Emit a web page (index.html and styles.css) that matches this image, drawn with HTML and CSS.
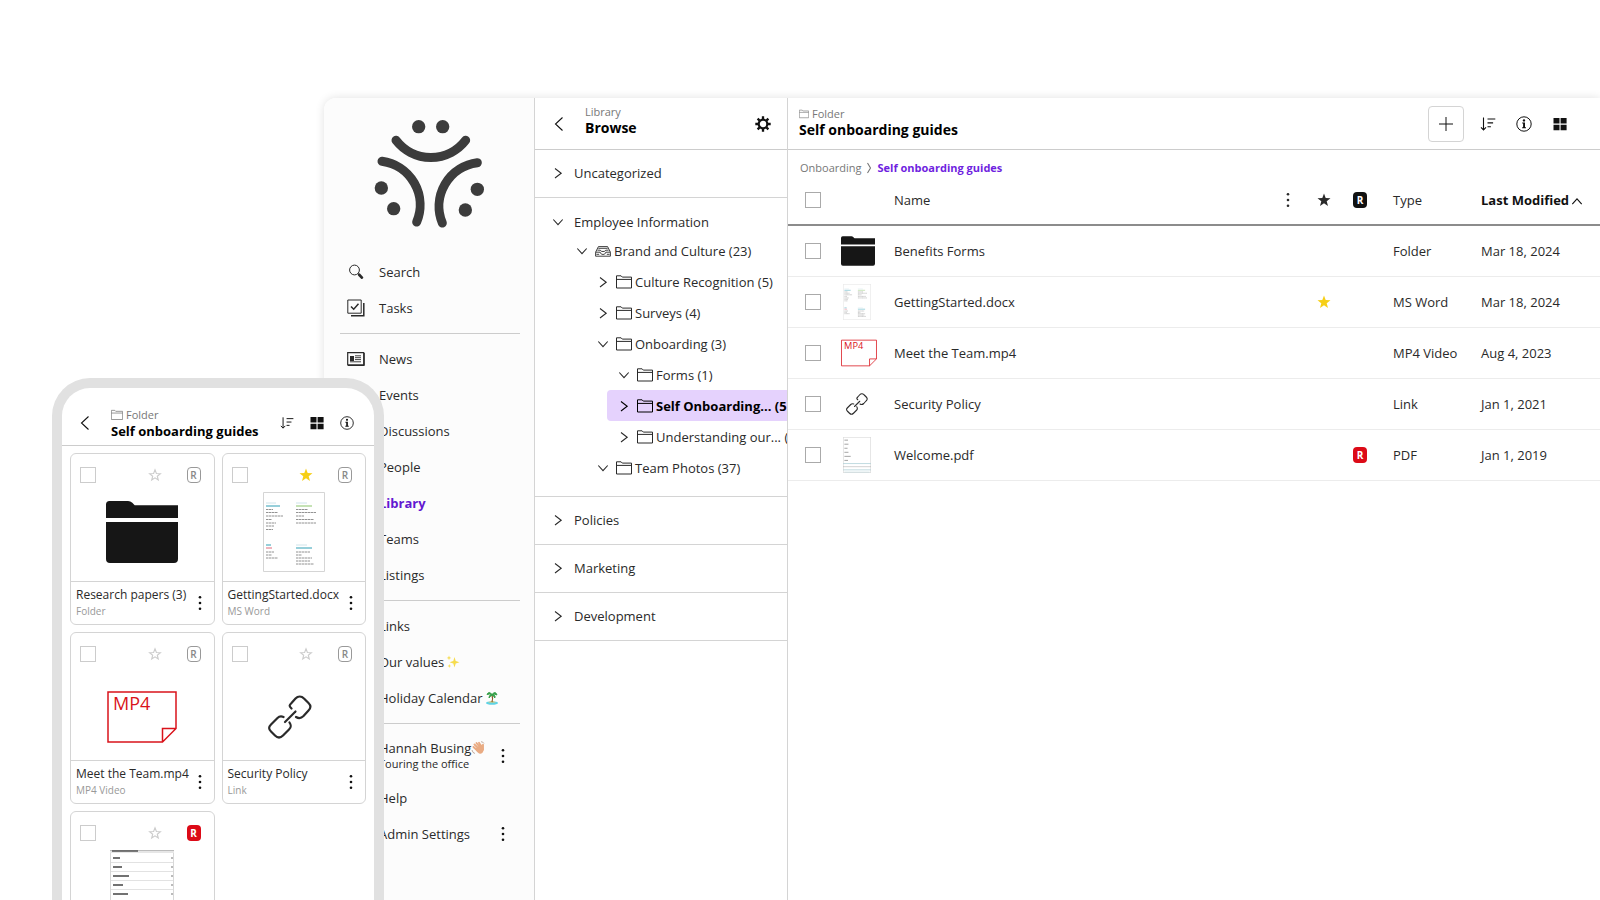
FILE: index.html
```html
<!DOCTYPE html>
<html lang="en">
<head>
<meta charset="utf-8">
<title>Library</title>
<link rel="stylesheet" href="styles.css">
</head>
<body>
<svg class="sprite" aria-hidden="true">
  <symbol id="left" viewBox="0 0 16 16"><path d="M11.5 1.5 4.5 8l7 6.5" fill="none" stroke="currentColor" stroke-width="1.1"/></symbol>
  <symbol id="right" viewBox="0 0 16 16"><path d="M5 3.5 11.2 8.2 5 13" fill="none" stroke="currentColor" stroke-width="1.1"/></symbol>
  <symbol id="crumb" viewBox="0 0 10 14"><path d="M3.5 2 6.500 7l-3 5" fill="none" stroke="currentColor" stroke-width="1.1"/></symbol>
  <symbol id="down" viewBox="0 0 16 16"><path d="M3.3 5.5 8 10.7l4.7-5.2" fill="none" stroke="currentColor" stroke-width="1.1"/></symbol>
  <symbol id="up" viewBox="0 0 16 16"><path d="M3.3 12.2 8 6.800l4.7 5.4" fill="none" stroke="currentColor" stroke-width="1.1"/></symbol>
  <symbol id="folder" viewBox="0 0 16 16"><path d="M.5 14V1.8h4.6l1.2 1.3h9.2V14zM.5 5.4h15" fill="none" stroke="currentColor"/></symbol>
  <symbol id="tray" viewBox="0 0 16 16"><path d="M.6 9.2 3.4 3.6h9.2l2.8 5.6v4H.6zM.8 9.2h4.4c.3 3 5.3 3 5.6 0h4.4M2.4 7.2h2.8c.4 1.8 5.2 1.8 5.6 0h2.8M3.3 5.3h9.4M1.4 11.3h2.8m7.6 0h2.8" fill="none" stroke="currentColor" stroke-width=".9"/></symbol>
  <symbol id="dots" viewBox="0 0 16 16"><circle cx="8" cy="2.2" r="1.3"/><circle cx="8" cy="8" r="1.3"/><circle cx="8" cy="13.8" r="1.3"/></symbol>
  <symbol id="star" viewBox="0 0 16 16"><path d="m8 1.5 1.7 4.5 4.8.2-3.8 3 1.3 4.7L8 11.2l-4 2.7 1.3-4.7-3.8-3 4.8-.2z"/></symbol>
  <symbol id="star-line" viewBox="0 0 16 16"><path d="m8 2.800 1.400 3.700 4 .2-3.100 2.500 1 3.800L8 10.800 4.700 13l1-3.800-3.100-2.500 4-.2z" fill="none" stroke="currentColor" stroke-width="1.100"/></symbol>
  <symbol id="sort" viewBox="0 0 16 16"><path d="M3.5 1.5v12.3M1 11.3l2.5 2.6L6 11.3M7.5 3h7.8M7.5 6.9h5.6M7.5 10.7h3.4" fill="none" stroke="currentColor" stroke-width="1.1"/></symbol>
  <symbol id="info" viewBox="0 0 16 16"><circle cx="8" cy="8" r="7.2" fill="none" stroke="currentColor" stroke-width="1"/><circle cx="8" cy="4.4" r="1.2"/><path d="M6.2 6.6H9v4.6h1v1H6.1v-1h1V7.6h-.9z"/></symbol>
  <symbol id="tiles" viewBox="0 0 16 16"><path d="M1.5 2h6v5.6h-6zM8.6 2h6v5.6h-6zM1.5 8.7h6v5.6h-6zM8.6 8.7h6v5.6h-6z"/></symbol>
  <symbol id="plus" viewBox="0 0 16 16"><path d="M8 1v14M1 8h14" fill="none" stroke="currentColor" stroke-width="1"/></symbol>
  <symbol id="gear" viewBox="0 0 16 16"><circle cx="8" cy="8" r="4.3" fill="none" stroke="currentColor" stroke-width="2.2"/><path d="M8 .3v3M8 12.7v3M.3 8h3M12.7 8h3M2.6 2.6l2 2M11.4 11.4l2 2M2.6 13.4l2-2M11.4 4.6l2-2" stroke="currentColor" stroke-width="2.3"/></symbol>
  <symbol id="search" viewBox="0 0 18 18"><circle cx="7.5" cy="7" r="4.9" fill="none" stroke="currentColor"/><path d="m11.2 10.6 1.5 1.4" stroke="currentColor"/><path d="m12.2 11.8 2.7 2.8" stroke="currentColor" stroke-width="2.8" stroke-linecap="round"/></symbol>
  <symbol id="tasks" viewBox="0 0 18 18"><path d="M.8 1h13.4v13.2H.8z" fill="none" stroke="currentColor"/><path d="M16.8 4v12.8H4" fill="none" stroke="currentColor" stroke-width="1.5"/><path d="m4 7.5 2.7 2.7 4.8-5.4" fill="none" stroke="currentColor" stroke-width="1.5"/></symbol>
  <symbol id="news" viewBox="0 0 18 18"><path d="M.7 2.6h16v12.2H.7z" fill="none" stroke="currentColor" stroke-width="1.2"/><path d="M17.3 3v12.5H1" fill="none" stroke="currentColor"/><path d="M3 6h4v5H3z"/><path d="M8 5.8h6M8 7.7h6M8 9.6h6M3 11.8h11" stroke="currentColor" stroke-width=".9"/></symbol>
  <symbol id="folder-solid" viewBox="0 0 72 62"><path d="M0 17V3.500Q0 0 3.500 0H22q2.500 0 4.300 1.800l2.400 2.400H72V17zM0 21h72v37q0 4-4 4H4q-4 0-4-4z"/></symbol>
  <symbol id="video" viewBox="0 0 70 52"><path d="M1 1h68v36.500L55.500 51H1zM69 37.500H55.500V51" fill="none" stroke="currentColor" stroke-width="1.500"/><text x="6" y="19" font-size="18" font-weight="500" fill="currentColor">MP4</text></symbol>
  <symbol id="chain" viewBox="0 0 44 44"><g fill="none" stroke="currentColor" stroke-width="2.200" stroke-linecap="round" stroke-linejoin="round"><path d="M17 27 27.500 16.500"/><path d="M23.500 13.500C21 11 21 10.500 23.500 8l4-4.500c2.500-2.700 6-2.700 8.500 0l4.500 4.500c2.500 2.500 2.500 5 0 7.500l-5 5.500c-2.500 2.500-5 2.500-7.500 1"/><path d="M15.500 22c-2.500-1-4-1-6 1L3 29.500c-2.500 2.500-2.500 4.500 0 7l4 4c2.500 2.500 5.500 2.500 8 0l6-6c2.500-2.500 2.500-4 .5-7"/></g></symbol>
  <symbol id="doc" viewBox="0 0 62 80"><path d="M.5.5h61v79H.5z" fill="#fff" stroke="#d5d5d5"/><path d="M3 14h14M3 53h5" stroke="#2f9fb5"/><path d="M33 14h16" stroke="#8bc56a"/><path d="M33 56h16" stroke="#2f9fb5"/><path d="M3 11h10M33 11h11M33 53h11" stroke="#cfe4ea"/><path d="M3 56h6" stroke="#df6a7a"/><path d="M3 17.500h7M3 20.500h12M3 24h17M3 27.500h6M3 31h10M3 34h8M3 37.500h7M33 17.500h12M33 20.500h20M33 24h8M33 27.500h18M33 31h20M3 60h8M3 63h6M3 66h12M33 60h14M33 63h6M33 66h16M33 69h14M33 72h18" stroke="#777" stroke-width=".8" stroke-dasharray="2.500 .5"/></symbol>
  <symbol id="pdf" viewBox="0 0 62 80"><path d="M.5.5h61v79H.5z" fill="#fff" stroke="#b8b8b8"/><path d="M3 7h8M3 16h9M3 25h7M3 34h9M3 43h14M3 52h8" stroke="#777" stroke-width="1.500"/><path d="M0 59h62M0 73h62" stroke="#a3c9d1" stroke-width="1.500"/><path d="M0 66h62" stroke="#999"/><path d="M3 78h56" stroke="#a3c9d1"/></symbol>
</svg>

<main class="window">
  <nav class="sidebar" aria-label="Main">
    <svg class="logo" viewBox="190 110 342 342" role="img" aria-label="Logo">
      <g fill="none" stroke="#3c3c3c" stroke-width="27" stroke-linecap="round"><path d="M259 180A132 132 0 0 0 468 180"/><path d="M217 243A132 132 0 0 1 321 425"/><path d="M503 247A132 132 0 0 0 398 428"/></g>
      <g fill="#3c3c3c"><circle cx="327" cy="139" r="20"/><circle cx="399" cy="139" r="20"/><circle cx="215" cy="323" r="20"/><circle cx="252" cy="385" r="20"/><circle cx="503" cy="327" r="20"/><circle cx="467" cy="389" r="20"/></g>
    </svg>
    <a class="nav-item" href="#"><svg class="icon-lg"><use href="#search"/></svg>Search</a>
    <a class="nav-item" href="#"><svg class="icon-lg"><use href="#tasks"/></svg>Tasks</a>
    <hr class="rule">
    <a class="nav-item" href="#"><svg class="icon-lg"><use href="#news"/></svg>News</a>
    <a class="nav-item plain" href="#">Events</a>
    <a class="nav-item plain" href="#">Discussions</a>
    <a class="nav-item plain" href="#">People</a>
    <a class="nav-item plain current" href="#">Library</a>
    <a class="nav-item plain" href="#">Teams</a>
    <a class="nav-item plain" href="#">Listings</a>
    <hr class="rule">
    <a class="nav-item plain" href="#">Links</a>
    <a class="nav-item plain" href="#">Our values
      <svg class="emoji" viewBox="0 0 14 14"><g fill="#f6dc4e"><path d="M8.500 2 9.700 6l3.800 1.200-3.800 1.300-1.200 4-1.200-4-3.800-1.300L7.300 6zM3 .5l.6 1.800 1.700.6-1.700.6L3 5.300l-.6-1.800-1.700-.6 1.700-.6zM3.300 9l.5 1.400 1.300.5-1.300.5-.5 1.500-.5-1.500-1.300-.5 1.300-.5z"/></g></svg></a>
    <a class="nav-item plain" href="#">Holiday Calendar
      <svg class="emoji" viewBox="0 0 14 14"><ellipse cx="7" cy="12" rx="6" ry="1.700" fill="#5fd4e6"/><path d="M3 11.500q4-3 8 0z" fill="#edc56b"/><path d="M7 4q1.200 3.500 0 7" fill="none" stroke="#8a5a2c" stroke-width="1.300"/><path d="M7 3.500Q4-.5 2 3.500q2.500-1 5 .3Q3.500 4 4 7q1.500-2 3-3 2 .8 2.800 3Q11 4 7.300 3.700 10 2.500 12 4 10.500-.5 7 3.500z" fill="#37a04a" stroke="#37a04a"/></svg></a>
    <hr class="rule">
    <div class="nav-row user">
      <a class="nav-item plain stacked" href="#"><span class="user-name">Hannah Busing
        <svg class="emoji" viewBox="0 0 14 14"><path d="M3.500 3.500 8 8M5.500 2 9.500 7M8 1.800l3 5M2.500 6 7 10M12 3.800v5" stroke="#e9ab83" stroke-width="1.900" stroke-linecap="round"/><path d="m4 8 6.500-4.500L12.500 8q.2 4-3 4.800Q7 13 4 8z" fill="#e9ab83"/><path d="M1 9q.5 3 3 3.500M10 .7q2 0 3 1.800" fill="none" stroke="#a98b7a" stroke-width=".7"/></svg></span><small>Touring the office</small></a>
      <button class="icon-button" aria-label="User menu"><svg class="icon"><use href="#dots"/></svg></button>
    </div>
    <a class="nav-item plain" href="#">Help</a>
    <div class="nav-row">
      <a class="nav-item plain" href="#">Admin Settings</a>
      <button class="icon-button" aria-label="Admin menu"><svg class="icon"><use href="#dots"/></svg></button>
    </div>
  </nav>

  <section class="browse">
    <header class="bar browse-bar">
      <button class="icon-button" aria-label="Back"><svg class="icon"><use href="#left"/></svg></button>
      <div class="heading browse-heading"><span class="eyebrow">Library</span><h2 class="title">Browse</h2></div>
      <button class="icon-button" aria-label="Settings"><svg class="icon"><use href="#gear"/></svg></button>
    </header>
    <div class="group"><button class="group-head"><svg class="icon"><use href="#right"/></svg>Uncategorized</button></div>
    <div class="group open">
      <button class="group-head"><svg class="icon"><use href="#down"/></svg>Employee Information</button>
      <ul class="tree">
        <li><a class="node top" href="#"><svg class="icon"><use href="#down"/></svg><svg class="icon kind"><use href="#tray"/></svg>Brand and Culture (23)</a>
          <ul>
            <li><a class="node" href="#"><svg class="icon"><use href="#right"/></svg><svg class="icon kind"><use href="#folder"/></svg>Culture Recognition (5)</a></li>
            <li><a class="node" href="#"><svg class="icon"><use href="#right"/></svg><svg class="icon kind"><use href="#folder"/></svg>Surveys (4)</a></li>
            <li><a class="node" href="#"><svg class="icon"><use href="#down"/></svg><svg class="icon kind"><use href="#folder"/></svg>Onboarding (3)</a>
              <ul>
                <li><a class="node" href="#"><svg class="icon"><use href="#down"/></svg><svg class="icon kind"><use href="#folder"/></svg>Forms (1)</a></li>
                <li><a class="node selected" href="#"><svg class="icon"><use href="#right"/></svg><svg class="icon kind"><use href="#folder"/></svg>Self Onboarding... (5</a></li>
                <li><a class="node" href="#"><svg class="icon"><use href="#right"/></svg><svg class="icon kind"><use href="#folder"/></svg>Understanding our... (</a></li>
              </ul></li>
            <li><a class="node" href="#"><svg class="icon"><use href="#down"/></svg><svg class="icon kind"><use href="#folder"/></svg>Team Photos (37)</a></li>
          </ul></li>
      </ul>
    </div>
    <div class="group"><button class="group-head"><svg class="icon"><use href="#right"/></svg>Policies</button></div>
    <div class="group"><button class="group-head"><svg class="icon"><use href="#right"/></svg>Marketing</button></div>
    <div class="group"><button class="group-head"><svg class="icon"><use href="#right"/></svg>Development</button></div>
  </section>

  <section class="files">
    <header class="bar files-bar">
      <div class="heading files-heading"><span class="eyebrow"><svg class="icon-xs"><use href="#folder"/></svg>Folder</span><h1 class="title">Self onboarding guides</h1></div>
      <div class="tools">
        <button class="icon-button add" aria-label="Add"><svg class="icon"><use href="#plus"/></svg></button>
        <button class="icon-button" aria-label="Sort"><svg class="icon"><use href="#sort"/></svg></button>
        <button class="icon-button" aria-label="Info"><svg class="icon"><use href="#info"/></svg></button>
        <button class="icon-button" aria-label="Tile view"><svg class="icon"><use href="#tiles"/></svg></button>
      </div>
    </header>
    <nav class="crumbs" aria-label="Breadcrumb"><a href="#">Onboarding</a><svg class="crumb-icon"><use href="#crumb"/></svg><a class="here" href="#">Self onboarding guides</a></nav>
    <table class="table">
      <colgroup><col class="c-check"><col class="c-thumb"><col><col class="c-icon"><col class="c-icon"><col class="c-icon"><col class="c-type"><col class="c-date"></colgroup>
      <thead>
        <tr><th class="check"><input type="checkbox" aria-label="Select all"></th><th></th><th>Name</th><th class="mid"><svg class="icon"><use href="#dots"/></svg></th><th class="mid"><svg class="icon"><use href="#star"/></svg></th><th class="mid"><span class="badge dark">R</span></th><th class="pad">Type</th><th class="pad"><button class="sorter">Last Modified<svg class="icon"><use href="#up"/></svg></button></th></tr>
      </thead>
      <tbody>
        <tr><td class="check"><input type="checkbox" aria-label="Select Benefits Forms"></td><td><svg class="thumb folder-thumb"><use href="#folder-solid"/></svg></td><td>Benefits Forms</td><td></td><td></td><td></td><td class="pad">Folder</td><td class="pad">Mar 18, 2024</td></tr>
        <tr><td class="check"><input type="checkbox" aria-label="Select GettingStarted.docx"></td><td><svg class="thumb doc-thumb"><use href="#doc"/></svg></td><td>GettingStarted.docx</td><td></td><td class="mid"><svg class="icon gold"><use href="#star"/></svg></td><td></td><td class="pad">MS Word</td><td class="pad">Mar 18, 2024</td></tr>
        <tr><td class="check"><input type="checkbox" aria-label="Select Meet the Team.mp4"></td><td><svg class="thumb red"><use href="#video"/></svg></td><td>Meet the Team.mp4</td><td></td><td></td><td></td><td class="pad">MP4 Video</td><td class="pad">Aug 4, 2023</td></tr>
        <tr><td class="check"><input type="checkbox" aria-label="Select Security Policy"></td><td><svg class="thumb link-thumb"><use href="#chain"/></svg></td><td>Security Policy</td><td></td><td></td><td></td><td class="pad">Link</td><td class="pad">Jan 1, 2021</td></tr>
        <tr><td class="check"><input type="checkbox" aria-label="Select Welcome.pdf"></td><td><svg class="thumb doc-thumb"><use href="#pdf"/></svg></td><td>Welcome.pdf</td><td></td><td></td><td class="mid"><span class="badge alert">R</span></td><td class="pad">PDF</td><td class="pad">Jan 1, 2019</td></tr>
      </tbody>
    </table>
  </section>
</main>

<aside class="phone">
  <header class="phone-bar">
    <button class="icon-button" aria-label="Back"><svg class="icon"><use href="#left"/></svg></button>
    <div class="heading"><span class="eyebrow"><svg class="icon-sm"><use href="#folder"/></svg>Folder</span><h2 class="title">Self onboarding guides</h2></div>
    <div class="phone-tools">
      <button class="icon-button" aria-label="Sort"><svg class="icon-md"><use href="#sort"/></svg></button>
      <button class="icon-button" aria-label="Tile view"><svg class="icon"><use href="#tiles"/></svg></button>
      <button class="icon-button" aria-label="Info"><svg class="icon-md"><use href="#info"/></svg></button>
    </div>
  </header>
  <div class="cards">
    <article class="card">
      <div class="card-top"><input type="checkbox" aria-label="Select Research papers"><svg class="icon pale"><use href="#star-line"/></svg><span class="badge line">R</span></div>
      <div class="preview"><svg class="big-folder"><use href="#folder-solid"/></svg></div>
      <footer class="card-foot"><div class="label"><span>Research papers (3)</span><small>Folder</small></div><button class="icon-button" aria-label="More"><svg class="icon"><use href="#dots"/></svg></button></footer>
    </article>
    <article class="card">
      <div class="card-top"><input type="checkbox" aria-label="Select GettingStarted.docx"><svg class="icon gold"><use href="#star"/></svg><span class="badge line">R</span></div>
      <div class="preview"><svg class="big-doc"><use href="#doc"/></svg></div>
      <footer class="card-foot"><div class="label"><span>GettingStarted.docx</span><small>MS Word</small></div><button class="icon-button" aria-label="More"><svg class="icon"><use href="#dots"/></svg></button></footer>
    </article>
    <article class="card">
      <div class="card-top"><input type="checkbox" aria-label="Select Meet the Team.mp4"><svg class="icon pale"><use href="#star-line"/></svg><span class="badge line">R</span></div>
      <div class="preview low"><svg class="big-video red"><use href="#video"/></svg></div>
      <footer class="card-foot"><div class="label"><span>Meet the Team.mp4</span><small>MP4 Video</small></div><button class="icon-button" aria-label="More"><svg class="icon"><use href="#dots"/></svg></button></footer>
    </article>
    <article class="card">
      <div class="card-top"><input type="checkbox" aria-label="Select Security Policy"><svg class="icon pale"><use href="#star-line"/></svg><span class="badge line">R</span></div>
      <div class="preview low link-preview"><svg class="big-link"><use href="#chain"/></svg></div>
      <footer class="card-foot"><div class="label"><span>Security Policy</span><small>Link</small></div><button class="icon-button" aria-label="More"><svg class="icon"><use href="#dots"/></svg></button></footer>
    </article>
    <article class="card">
      <div class="card-top"><input type="checkbox" aria-label="Select document"><svg class="icon pale"><use href="#star-line"/></svg><span class="badge alert">R</span></div>
      <div class="preview"><svg class="big-pdf" viewBox="0 0 64 80"><path d="M.5 0v80M63.500 0v80" stroke="#d8d8d8"/><path d="M0 0h64v3H0z" fill="#e6e6e6"/><path d="M0 .5h64" stroke="#bbb"/><path d="M2 1h26" stroke="#555" stroke-width="1.500"/><path d="M1 12.500h62M1 21.500h62M1 30.500h62M1 39.500h62" stroke="#e2e2e2"/><path d="M3 8h7M3 17h9M3 26h16M3 35h10M3 44h15" stroke="#444" stroke-width="1.500"/><path d="M62 7v2M62 16v2M62 25v2M62 34v2M62 43v2" stroke="#777"/></svg></div>
    </article>
  </div>
</aside>
</body>
</html>
```
FILE: styles.css
```css
* { box-sizing: border-box; }

body {
  margin: 0;
  height: 100vh;
  overflow: hidden;
  position: relative;
  background: #fff;
  color: #2a2a2a;
  font: 13px/16px "Open Sans", "Noto Sans", sans-serif;
}

a { color: inherit; text-decoration: none; }
button { font: inherit; color: inherit; background: none; border: 0; padding: 0; }
svg { fill: currentColor; flex: none; display: block; }
h1, h2 { margin: 0; }

.sprite { position: absolute; width: 0; height: 0; }

.icon { width: 16px; height: 16px; }
.icon-xs { width: 10px; height: 10px; }
.icon-sm { width: 12px; height: 12px; }
.icon-md { width: 14px; height: 14px; }
.icon-lg { width: 18px; height: 18px; }
.icon-button { display: flex; align-items: center; justify-content: center; color: #111; }

input[type="checkbox"] {
  appearance: none;
  display: block;
  width: 16px;
  height: 16px;
  margin: 0;
  border: 1px solid #aaa;
  background: #fff;
}

.badge {
  display: inline-block;
  width: 14px;
  height: 16px;
  border-radius: 4px;
  font-size: 10px;
  font-weight: 700;
  line-height: 16px;
  text-align: center;
  vertical-align: middle;
}
.dark { background: #111; color: #fff; }
.alert { background: #dc0a17; color: #fff; }
.line { border: 1px solid #999; color: #888; line-height: 14px; font-weight: 600; }
.gold { color: #f6cf17; }
.pale { color: #ccc; }
.red { color: #d9131b; }

.window {
  display: grid;
  grid-template-columns: 211px 253px 1fr;
  height: calc(100vh - 98px);
  margin: 98px 0 0 324px;
  border-radius: 12px 0 0 0;
  box-shadow: 0 0 10px rgba(0, 0, 0, .12);
  overflow: hidden;
}

.sidebar {
  padding: 19px 14px 0 16px;
  background: #fcfcfc;
  border-right: 1px solid #d4d4d4;
}
.logo { width: 114px; height: 114px; margin: 0 auto 23px; }
.nav-item { display: flex; align-items: center; height: 36px; padding-left: 7px; gap: 14px; }
.plain { padding-left: 39px; gap: 2px; }
.current { color: #6218d0; font-weight: 700; }
.rule { height: 1px; margin: 7px 0; border: 0; background: #ccc; }
.nav-row { display: flex; justify-content: space-between; align-items: center; padding-right: 9px; }
.user { height: 49px; }
.stacked { flex-direction: column; align-items: flex-start; justify-content: center; gap: 0; }
.stacked small { font-size: 11px; }
.user-name { display: flex; align-items: center; }
.emoji { width: 14px; height: 14px; }

.bar { display: flex; align-items: center; height: 52px; border-bottom: 1px solid #ccc; }
.heading { display: flex; flex-direction: column; }
.eyebrow { display: flex; align-items: center; gap: 3px; color: #777; font-size: 11px; }
.title { color: #000; font-size: 14px; line-height: 16px; font-weight: 700; white-space: nowrap; }

.browse { border-right: 1px solid #d4d4d4; background: #fff; overflow: hidden; }
.browse-bar { padding: 0 16px; }
.browse-heading { flex: 1; padding-left: 18px; margin-bottom: 7px; }
.group { border-bottom: 1px solid #d4d4d4; }
.group-head { display: flex; align-items: center; gap: 8px; width: 100%; height: 47px; padding: 0 0 1px 15px; }
.open { padding: 6px 0 13px; }
.open .group-head { height: 36px; }
.tree, .tree ul { list-style: none; margin: 0; padding: 0 0 0 21px; }
.tree { padding-left: 30px; }
.node { display: flex; align-items: center; height: 31px; padding-left: 9px; white-space: nowrap; border-radius: 4px 0 0 4px; }
.top { height: 22px; margin-bottom: 4px; }
.kind { margin: 0 3px 0 5px; }
.selected { background: #e5d2fd; color: #000; font-weight: 700; }

.files { background: #fff; min-width: 0; }
.files-bar { justify-content: space-between; padding: 0 32px 0 11px; }
.files-heading { margin-bottom: 4px; }
.tools { display: flex; align-items: center; gap: 20px; }
.add { width: 36px; height: 36px; border: 1px solid #d4d4d4; border-radius: 4px; margin-right: -4px; }
.crumbs { display: flex; align-items: center; gap: 3px; padding: 10px 12px 7px; color: #777; font-size: 11px; }
.crumb-icon { width: 10px; height: 14px; }
.here { color: #6f1fe0; font-weight: 700; }

.table { width: 100%; table-layout: fixed; border-collapse: collapse; }
.c-check { width: 53px; }
.c-thumb { width: 53px; }
.c-icon { width: 36px; }
.c-type { width: 88px; }
.c-date { width: 134px; }
.table th { height: 42px; padding: 0 0 8px; border-bottom: 2px solid #8c8c8c; font-weight: 400; text-align: left; }
.table td { height: 51px; padding: 0; border-bottom: 1px solid #ececec; }
.table .check { padding-left: 17px; }
.table .pad { padding-left: 15px; }
.mid svg { margin: 0 auto; }
.table .mid { text-align: center; }
.sorter { display: flex; align-items: center; color: #111; font-weight: 700; }
.thumb { width: 36px; height: 36px; }
.folder-thumb { width: 34px; height: 30px; color: #161616; }
.doc-thumb { width: 28px; margin-left: 2px; }
.link-thumb { width: 32px; height: 22px; }

.phone {
  position: absolute;
  top: 378px;
  left: 52px;
  width: 332px;
  bottom: 0;
  overflow: hidden;
  border: 10px solid #e1e1e1;
  border-bottom: 0;
  border-radius: 38px 38px 0 0;
  background: #fff;
  font-size: 12px;
}
.phone-bar { display: flex; align-items: center; height: 58px; padding: 13px 20px 0 15px; border-bottom: 1px solid #ccc; }
.phone-bar .heading { flex: 1; padding-left: 18px; }
.phone-bar .title { font-size: 13px; }
.phone-tools { display: flex; align-items: center; gap: 15px; }
.cards { display: grid; grid-template-columns: repeat(2, minmax(0, 1fr)); gap: 7px; padding: 7px 8px; }
.card { border: 1px solid #d4d4d4; border-radius: 6px; }
.card-top { display: flex; align-items: center; padding: 13px 13px 0 9px; }
.card-top input { border-color: #ccc; margin-right: auto; }
.card-top .icon { margin-right: 24px; }
.preview { display: flex; align-items: center; justify-content: center; height: 98px; }
.low { padding-top: 12px; }
.link-preview { padding-right: 8px; }
.card-foot { display: flex; align-items: center; justify-content: space-between; height: 43px; padding: 0 6px 0 5px; border-top: 1px solid #d4d4d4; }
.label { display: flex; flex-direction: column; white-space: nowrap; }
.label small { font-size: 10px; color: #999; }
.big-folder { width: 72px; height: 62px; color: #161616; }
.big-doc { width: 62px; height: 80px; }
.big-video { width: 70px; height: 52px; }
.big-link { width: 44px; height: 44px; }
.big-pdf { width: 64px; height: 80px; }
```
